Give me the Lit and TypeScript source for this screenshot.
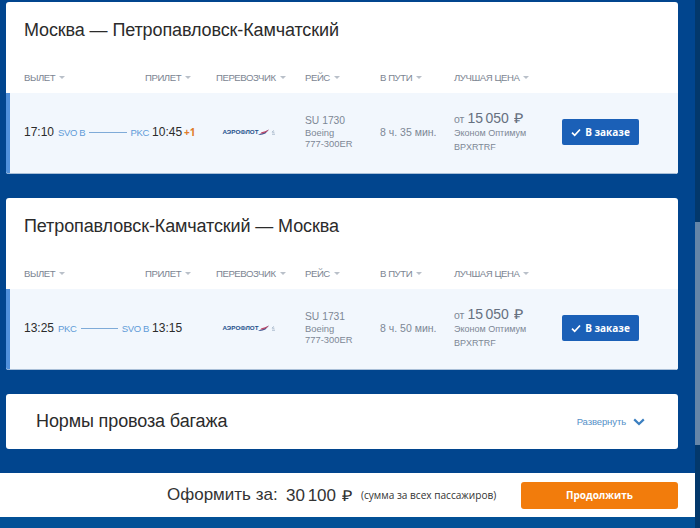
import { LitElement, html, css, svg } from "lit";
import { customElement, property } from "lit/decorators.js";

interface Flight {
  title: string;
  depart: string;
  from: string;
  to: string;
  arrive: string;
  shift: string;
  code: string;
  duration: string;
}

const FLIGHTS: Flight[] = [
  { title: "Москва — Петропавловск-Камчатский", depart: "17:10", from: "SVO B", to: "PKC", arrive: "10:45", shift: "+1", code: "SU 1730", duration: "8 ч. 35 мин." },
  { title: "Петропавловск-Камчатский — Москва", depart: "13:25", from: "PKC", to: "SVO B", arrive: "13:15", shift: "", code: "SU 1731", duration: "8 ч. 50 мин." },
];

const COLUMNS = ["ВЫЛЕТ", "ПРИЛЕТ", "ПЕРЕВОЗЧИК", "РЕЙС", "В ПУТИ", "ЛУЧШАЯ ЦЕНА"];

@customElement("carrier-logo")
export class CarrierLogo extends LitElement {
  static styles = css`
    :host { display: block; width: 54px; height: 10px; }
    svg { display: block; }
    text { font: bold 5.6px "Liberation Sans", Arial, sans-serif; fill: #24518c; }
  `;
  render() {
    return html`<svg width="54" height="10" viewBox="0 0 54 10">
      ${svg`
        <text x="0.5" y="7.4" textLength="36" lengthAdjust="spacingAndGlyphs">АЭРОФЛОТ</text>
        <path d="M36 7.8 Q41 6.4 47 2.4 L43.4 6.6 Q40 8.2 36 7.8Z" fill="#3d5490"/>
        <path d="M39.5 5.2 Q43 4.5 47 2.4 L44.5 5 Q41.5 6.4 38 6.8Z" fill="#c0496a"/>
        <path d="M51.6 3.4 L50.2 5.2 H52.4 M50 7.2 H53" fill="none" stroke="#a9b9cb" stroke-width="1"/>
      `}
    </svg>`;
  }
}

@customElement("flight-card")
export class FlightCard extends LitElement {
  @property({ attribute: false }) flight!: Flight;

  static styles = css`
    :host {
      display: flex; flex-direction: column; box-sizing: border-box; height: 172px;
      background: #fff; border-radius: 3px; overflow: hidden; white-space: nowrap;
    }
    .title { margin: 0; padding: 16px 18px 0; height: 44px; font-size: 18px; line-height: 24px; font-weight: 400; letter-spacing: -0.12px; color: #2b2b2b; }
    .cols { display: grid; grid-template-columns: 121px 71px 89px 75px 74px 108px 1fr; }
    .head { height: 31px; padding: 0 0 0 18px; font-size: 9.6px; line-height: 31px; color: #7c8592; letter-spacing: -0.45px; }
    .head span { display: flex; align-items: center; gap: 4px; }
    .head i { width: 0; height: 0; border: 3px solid transparent; border-top: 3px solid #b9c0c9; border-bottom: 0; }
    .row {
      flex: 1; grid-template-columns: 192px 89px 75px 74px 108px 1fr; align-items: center;
      padding: 0 0 2px 14px; border-left: 4px solid #5090db; border-bottom: 1px solid #a9bfd8; background: #f2f7fd; color: #7d8795;
    }
    .times { display: flex; align-items: center; font-size: 12px; color: #2b2b2b; }
    .route { display: flex; align-items: center; width: 91px; margin: 0 3px 0 4px; font-size: 9.5px; letter-spacing: -0.35px; color: #5f9bd8; }
    .route b { flex: 1; height: 1px; margin: 0 4px; background: #7fabd8; }
    .shift { margin-left: 2px; font: bold 10px "Open Sans", sans-serif; color: #e07b28; }
    .logo { margin-left: 6px; }
    .plane { font-size: 9.4px; line-height: 11px; }
    .plane div:first-child { font-size: 10.3px; line-height: 12px; }
    .duration { font-size: 10.5px; }
    .fare { font-size: 9px; line-height: 14px; }
    .price { display: flex; align-items: baseline; font-size: 10.5px; line-height: 14px; }
    .price strong { margin: 0 5px 0 3px; font-size: 14px; font-weight: 400; word-spacing: -1.5px; color: #667080; }
    .ruble { font-size: 13.5px; color: #667080; transform: scaleX(1.2); transform-origin: left; }
    .order {
      display: flex; align-items: center; justify-content: center; gap: 4px; width: 77px; height: 26px;
      border-radius: 2px; background: #1b60b7; color: #fff; font: bold 10px "Open Sans", sans-serif;
    }
  `;

  render() {
    const f = this.flight;
    return html`
      <h2 class="title">${f.title}</h2>
      <div class="cols head">${COLUMNS.map((c) => html`<span>${c}<i></i></span>`)}</div>
      <div class="cols row">
        <div class="times">
          <span>${f.depart}</span>
          <span class="route"><span>${f.from}</span><b></b><span>${f.to}</span></span>
          <span>${f.arrive}</span><span class="shift">${f.shift}</span>
        </div>
        <carrier-logo class="logo"></carrier-logo>
        <div class="plane"><div>${f.code}</div><div>Boeing</div><div>777-300ER</div></div>
        <div class="duration">${f.duration}</div>
        <div class="fare">
          <div class="price"><span>от</span><strong>15 050</strong><span class="ruble">₽</span></div>
          <div>Эконом Оптимум</div><div>BPXRTRF</div>
        </div>
        <div class="order">
          <svg width="10" height="9" viewBox="0 0 10 9"><path d="M1 4.7 L3.7 7.3 L9 1.5" fill="none" stroke="#fff" stroke-width="1.7"/></svg>
          <span>В заказе</span>
        </div>
      </div>
    `;
  }
}

@customElement("app-root")
export class AppRoot extends LitElement {
  static styles = css`
    :host { display: flex; width: 700px; height: 528px; overflow: hidden; background: #01458e; font-family: "Liberation Sans", Arial, sans-serif; }
    .page { display: flex; flex-direction: column; width: 695px; }
    .list { display: flex; flex-direction: column; gap: 24px; box-sizing: border-box; height: 473px; padding: 2px 17px 0 6px; }
    .baggage { display: flex; align-items: center; justify-content: space-between; height: 55px; box-sizing: border-box; padding: 0 33px 0 30px; border-radius: 3px; background: #fff; }
    .baggage h2 { margin: 0; font-size: 18px; font-weight: 400; letter-spacing: -0.12px; color: #2b2b2b; }
    .expand { display: flex; align-items: center; gap: 7px; font-size: 9.5px; letter-spacing: -0.1px; color: #5590c8; }
    .pay { display: flex; align-items: center; height: 44px; box-sizing: border-box; padding-left: 167px; background: #fff; color: #333; white-space: nowrap; }
    .label { width: 119px; font-size: 17px; }
    .total { display: flex; align-items: baseline; gap: 6px; width: 75px; font-size: 17px; word-spacing: -2px; }
    .ruble { font-size: 15px; transform: scaleX(1.2); transform-origin: left; }
    .note { width: 160px; font: 10.1px "Open Sans", sans-serif; }
    .go { width: 157px; height: 27px; border-radius: 3px; background: #f27c0c; color: #fff; font: bold 10px/27px "Open Sans", sans-serif; text-align: center; }
    .below { flex: 1; background: #025096; }
    .scroll { width: 5px; box-sizing: border-box; padding-top: 222px; background: #03386b; }
    .thumb { height: 223px; background: #6485a8; }
  `;

  render() {
    return html`
      <div class="page">
        <div class="list">
          ${FLIGHTS.map((f) => html`<flight-card .flight=${f}></flight-card>`)}
          <div class="baggage">
            <h2>Нормы провоза багажа</h2>
            <div class="expand"><span>Развернуть</span>
              <svg width="12" height="8" viewBox="0 0 12 8"><path d="M1.2 1.4 L6 6 L10.8 1.4" fill="none" stroke="#3b7fc0" stroke-width="2.2"/></svg>
            </div>
          </div>
        </div>
        <div class="pay">
          <span class="label">Оформить за:</span>
          <span class="total"><span>30 100</span><span class="ruble">₽</span></span>
          <span class="note">(сумма за всех пассажиров)</span>
          <div class="go">Продолжить</div>
        </div>
        <div class="below"></div>
      </div>
      <div class="scroll"><div class="thumb"></div></div>
    `;
  }
}
